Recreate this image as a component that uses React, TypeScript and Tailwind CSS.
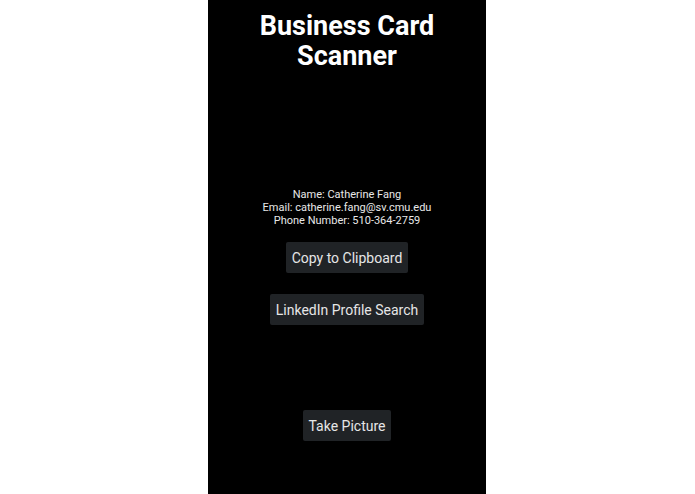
import React from 'react';

type Contact = {
  name: string;
  email: string;
  phone: string;
};

const contact: Contact = {
  name: 'Catherine Fang',
  email: 'catherine.fang@sv.cmu.edu',
  phone: '510-364-2759',
};

const ActionButton = ({ label, className = '' }: { label: string; className?: string }) => (
  <button
    type="button"
    className={`h-[31px] px-[6px] bg-[#202326] text-[#e6e6e6] text-[14px] leading-none rounded-[2px] shadow-[0_1px_2px_rgba(0,0,0,0.5)] ${className}`}
  >
    {label}
  </button>
);

const App = () => {
  return (
    <div
      className="flex bg-white w-full h-[494px]"
      style={{ fontFamily: 'Roboto, "Noto Sans", sans-serif' }}
    >
      <div className="flex flex-col items-center bg-black ml-[208px] w-[278px] h-full">
        <h1 className="pt-[11px] font-bold text-[27px] text-white text-center leading-[30px]">
          Business Card
          <br />
          Scanner
        </h1>

        <div className="mt-[117px] text-[#e8e8e8] text-[11px] text-center leading-[13px]">
          <p>Name: {contact.name}</p>
          <p>Email: {contact.email}</p>
          <p>Phone Number: {contact.phone}</p>
        </div>

        <ActionButton label="Copy to Clipboard" className="mt-[15px]" />
        <ActionButton label="LinkedIn Profile Search" className="mt-[21px]" />
        <ActionButton label="Take Picture" className="mt-[85px]" />
      </div>
    </div>
  );
};

export default App;
